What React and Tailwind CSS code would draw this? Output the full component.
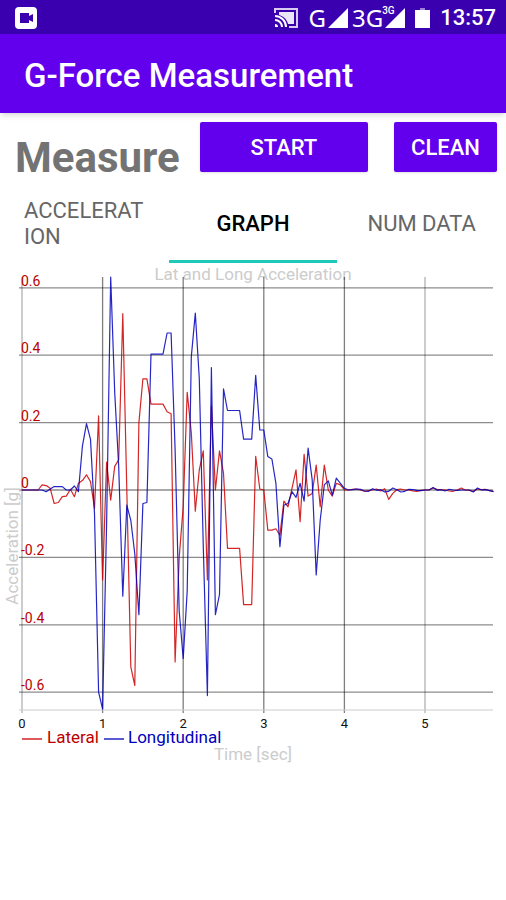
const STEP = 0.05;

// One sample every 0.05 s, in g
const lateral = [
    0, 0, 0, 0, 0, 0.015, 0.013, 0.005, -0.04, -0.037,
    -0.02, -0.018, 0.002, -0.02, 0.02, 0.028, 0.045, 0.025, -0.055, 0.22,
    -0.267, 0.083, -0.03, 0.07, 0.09, 0.523, 0, -0.525, -0.58, 0.2,
    0.33, 0.33, 0.255, 0.255, 0.255, 0.255, 0.232, 0.226, -0.51, -0.2,
    -0.05, 0.29, 0.17, -0.063, 0.06, 0.116, -0.267, 0.25, 0, 0.116,
    0.05, -0.173, -0.173, -0.173, -0.173, -0.34, -0.34, -0.34, 0.1, 0.003,
    0, -0.119, -0.119, -0.115, -0.134, -0.033, -0.05, 0.005, 0.06, -0.094,
    0.106, -0.018, -0.01, 0.074, -0.05, 0.074, 0, -0.018, 0.02, 0.015,
    0, 0, 0.002, 0.003, 0, -0.004, -0.002, 0, 0.003, -0.003,
    0.004, -0.028, -0.01, 0.001, 0.003, 0, 0, -0.003, -0.004, -0.001,
    0, 0, 0.006, 0.002, 0.001, 0, -0.003, -0.004, 0, 0.006,
    0, -0.001, -0.004, 0.003, 0.001, 0.002, -0.002, -0.004,
];

const longitudinal = [
    0, 0, 0, 0, 0, 0, -0.005, 0.003, 0.01, 0.01,
    0.01, 0, 0, 0.012, -0.005, 0.13, 0.197, 0.15, -0.07, -0.6,
    -0.65, -0.1, 0.632, 0.29, 0.07, -0.315, -0.045, -0.09, -0.19, -0.37,
    -0.04, -0.037, 0.403, 0.403, 0.403, 0.403, 0.466, 0.466, 0.12, -0.36,
    -0.5, -0.3, 0.395, 0.525, 0.33, -0.17, -0.61, 0.363, -0.37, -0.31,
    0.3, 0.236, 0.236, 0.236, 0.236, 0.151, 0.151, 0.151, 0.34, 0.178,
    0.178, 0.099, 0.092, 0.02, -0.168, -0.045, -0.04, -0.005, -0.022, 0.02,
    -0.033, 0.124, 0.03, -0.252, -0.09, 0.015, 0.027, -0.015, 0.035, 0.02,
    0.005, 0, 0.001, 0.003, 0.002, -0.003, -0.004, 0.004, -0.001, 0.001,
    -0.006, -0.004, 0.006, 0.001, -0.006, -0.004, 0.002, 0.001, -0.001, -0.002,
    0, 0, 0.007, -0.001, 0.001, -0.003, 0.002, 0, -0.001, 0,
    0, 0, -0.006, 0.006, 0, 0.001, -0.002, -0.005,
];

const xTicks = [0, 1, 2, 3, 4, 5];
const yTicks = [0.6, 0.4, 0.2, 0, -0.2, -0.4, -0.6];

const toX = (t) => 22 + t * 80.6;
const toY = (g) => 227 - g * 337;
const toPoints = (samples) => samples.map((g, i) => `${toX(i * STEP).toFixed(1)},${toY(g).toFixed(1)}`).join(' ');

const CastIcon = () => (
    <svg viewBox="0 0 24 20" className="w-6 h-5" fill="none" stroke="white" strokeWidth="2">
        <path d="M1 5V1h22v18H15" strokeOpacity="0.8" />
        <path d="M5 4h15v12h-6C13 11 9 8 5 7z" fill="white" fillOpacity="0.9" stroke="none" />
        <path d="M1 8a11 11 0 0 1 11 11M1 12a7 7 0 0 1 7 7" />
        <path d="M1 16v3h3a3 3 0 0 0-3-3z" fill="white" stroke="none" />
    </svg>
);

const SignalIcon = () => (
    <svg viewBox="0 0 20 20" className="w-5 h-5" fill="white">
        <path d="M20 0v20H0z" />
    </svg>
);

const StatusBar = () => (
    <div className="h-[34px] bg-[#3a00b0] text-white flex items-center justify-between pl-[15px] pr-[10px] pt-px">
        <svg viewBox="0 0 22 22" className="w-[22px] h-[22px]">
            <rect width="22" height="22" rx="4" fill="white" />
            <path d="M5 6h9v3l4-2v8l-4-2v3H5z" fill="#3a00b0" />
        </svg>
        <div className="flex items-center">
            <CastIcon />
            <span className="font-['Noto_Sans'] text-[24px] leading-5 ml-[10px] mr-[2px]">G</span>
            <SignalIcon />
            <span className="font-['Noto_Sans'] text-[24px] leading-5 ml-1">3G</span>
            <span className="relative flex">
                <span className="absolute -top-[2px] -left-px text-[10px] leading-none font-medium">3G</span>
                <span className="ml-[2px]"><SignalIcon /></span>
            </span>
            <svg viewBox="0 0 15 20" className="w-[15px] h-5 ml-[10px]" fill="white">
                <path d="M5 0h5v2H5z" fillOpacity="0.5" />
                <path d="M0 2h15v18H0z" />
            </svg>
            <span className="text-[22px] leading-5 font-medium ml-[10px]">13:57</span>
        </div>
    </div>
);

const Chart = () => (
    <svg viewBox="0 0 506 510" className="block w-full" role="img" aria-label="Lat and Long Acceleration">
        <text x="253" y="17" textAnchor="middle" fontSize="17" fill="#cccccc">Lat and Long Acceleration</text>

        {/* Grid */}
        {yTicks.map(g => (
            <line key={g} x1="19" x2="493" y1={toY(g)} y2={toY(g)} stroke="#000000" strokeOpacity="0.45" strokeWidth="1.3" />
        ))}
        {xTicks.map(t => (
            <line key={t} x1={toX(t)} x2={toX(t)} y1="14" y2="450" stroke="#000000" strokeOpacity={t === 0 || t === 5 ? 0.2 : 0.5} strokeWidth={t === 0 || t === 5 ? 2 : 1.3} />
        ))}
        <line x1="19" x2="493" y1="447" y2="447" stroke="#cccccc" />

        {/* Series */}
        <polyline points={toPoints(lateral)} fill="none" stroke="#cc0000" strokeOpacity="0.85" strokeWidth="1.2" strokeLinejoin="round" />
        <polyline points={toPoints(longitudinal)} fill="none" stroke="#0000bb" strokeOpacity="0.85" strokeWidth="1.2" strokeLinejoin="round" />

        {/* Axis labels */}
        {yTicks.map(g => (
            <text key={g} x="21" y={toY(g) - 2} fontSize="14" fill="#bb0000">{g}</text>
        ))}
        {xTicks.map(t => (
            <text key={t} x={toX(t)} y="465" textAnchor="middle" fontSize="13" fill="#111111">{t}</text>
        ))}
        <text transform="translate(18 283) rotate(-90)" textAnchor="middle" fontSize="17" fill="#cccccc">Acceleration [g]</text>
        <text x="253" y="497" textAnchor="middle" fontSize="17" fill="#cccccc">Time [sec]</text>

        {/* Legend */}
        <line x1="22" x2="42" y1="476" y2="476" stroke="#cc0000" strokeWidth="1.3" />
        <text x="47" y="480" fontSize="17" fill="#bb0000">Lateral</text>
        <line x1="104" x2="124" y1="476" y2="476" stroke="#0000bb" strokeWidth="1.3" />
        <text x="128" y="480" fontSize="17" fill="#0000bb">Longitudinal</text>
    </svg>
);

const btnClass = 'h-[50px] rounded-xs bg-[#6200ee] text-white text-[22px] font-medium shadow-sm';
const tabClass = 'flex items-center h-full text-[22px] leading-[26px] border-b-3';

const App = () => (
    <div className="min-h-screen bg-white font-[Roboto,sans-serif]">
        <StatusBar />
        <header className="h-[79px] bg-[#6200ee] flex items-center px-6 pt-1 shadow-md">
            <h1 className="text-white text-[33px] font-medium">G-Force Measurement</h1>
        </header>

        <main>
            <div className="flex items-start pt-[9px] pl-[15px] pr-[9px] h-[74px]">
                <h2 className="text-[42px] leading-[72px] font-bold text-[#737373] mr-5">Measure</h2>
                <button type="button" className={`${btnClass} flex-1 mr-[26px]`}>START</button>
                <button type="button" className={`${btnClass} w-[103px]`}>CLEAN</button>
            </div>

            <div role="tablist" className="grid grid-cols-3 h-[76px]">
                <button type="button" role="tab" aria-selected="false" className={`${tabClass} px-6 border-transparent text-left break-all text-[#666666]`}>ACCELERATION</button>
                <button type="button" role="tab" aria-selected="true" className={`${tabClass} justify-center border-[#1fc8b8] text-black font-medium`}>GRAPH</button>
                <button type="button" role="tab" aria-selected="false" className={`${tabClass} justify-center border-transparent text-[#666666]`}>NUM DATA</button>
            </div>

            <Chart />
        </main>
    </div>
);

export default App;
